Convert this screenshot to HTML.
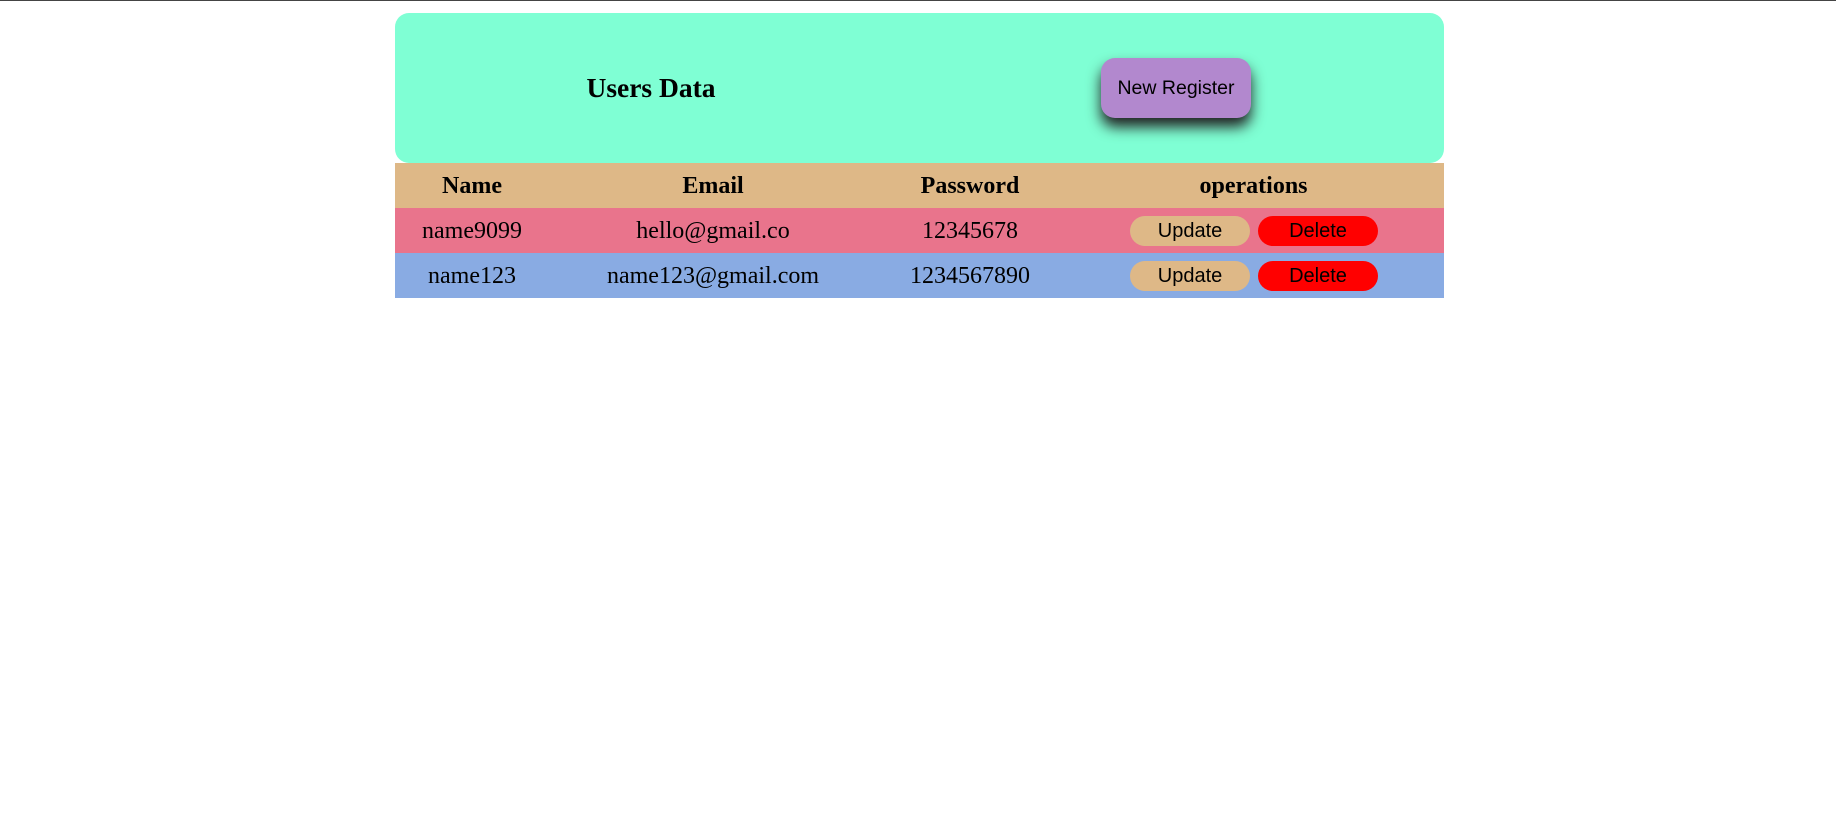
<!DOCTYPE html>
<html><head><style>
body{margin:0;width:1836px;height:825px;background:#fff;font-family:"Liberation Serif",serif;position:relative;overflow:hidden}
.top{position:absolute;left:0;top:0;width:1836px;height:1px;background:#444}
.hdr{position:absolute;left:395px;top:13px;width:1049px;height:150px;background:#7fffd4;border-radius:14px}
.title{position:absolute;left:0;width:1302px;top:73px;text-align:center;font-weight:bold;font-size:27.5px;line-height:30px;margin:0;}
.reg{position:absolute;left:1101px;top:58px;width:150px;height:60px;background:#b288ce;border-radius:14px;box-shadow:0 9px 14px #222;font-family:"Liberation Sans",sans-serif;font-size:19.5px;line-height:60px;text-align:center}
table{position:absolute;left:395px;top:163px;width:1049px;border-collapse:collapse;table-layout:fixed;font-size:24px}
td,th{padding:0;text-align:center;height:45px}
td>i,th>i{font-style:normal;position:relative;top:1px}
th{font-weight:bold}
.b{display:inline-block;width:120px;height:30px;line-height:30px;border-radius:15px;font-family:"Liberation Sans",sans-serif;font-size:20px;vertical-align:middle;text-align:center}
</style></head><body>
<div class="top"></div>
<div class="hdr"></div>
<h2 class="title">Users Data</h2>
<div class="reg">New Register</div>
<table>
<colgroup><col style="width:154px"><col style="width:328px"><col style="width:186px"><col style="width:381px"></colgroup>
<tr style="background:#deb887"><th><i>Name</i></th><th><i>Email</i></th><th><i>Password</i></th><th><i>operations</i></th></tr>
<tr style="background:#e9748c"><td><i>name9099</i></td><td><i>hello@gmail.co</i></td><td><i>12345678</i></td><td style="text-align:left;padding-left:67px"><span class="b" style="background:#deb887">Update</span><span class="b" style="background:#f00;margin-left:8px">Delete</span></td></tr>
<tr style="background:#89abe3"><td><i>name123</i></td><td><i>name123@gmail.com</i></td><td><i>1234567890</i></td><td style="text-align:left;padding-left:67px"><span class="b" style="background:#deb887">Update</span><span class="b" style="background:#f00;margin-left:8px">Delete</span></td></tr>
</table>
</body></html>
